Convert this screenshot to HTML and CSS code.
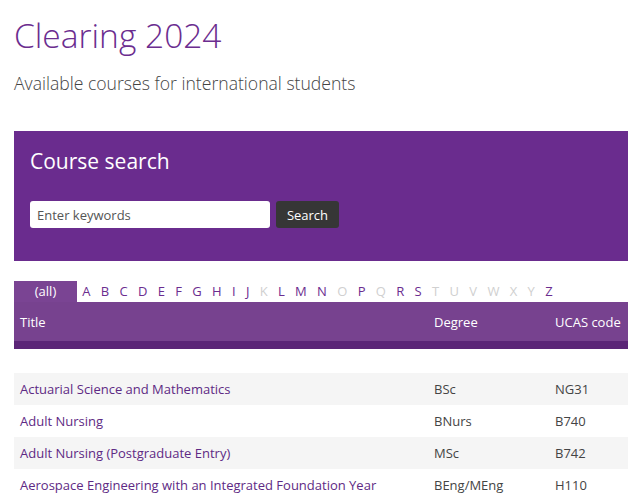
FILE: index.html
```html
<!DOCTYPE html>
<html lang="en">
<head>
<meta charset="utf-8">
<title>Clearing 2024</title>
<link rel="stylesheet" href="styles.css">
</head>
<body>
<main class="page">
  <h1 class="title">Clearing 2024</h1>
  <p class="subtitle">Available courses for international students</p>

  <section class="search">
    <h2 class="search-title">Course search</h2>
    <form class="search-form">
      <input class="search-input" type="text" placeholder="Enter keywords">
      <button class="search-btn" type="button">Search</button>
    </form>
  </section>

  <nav class="letters">
    <span class="tab-all">(all)</span>
    <a class="letter">A</a><a class="letter">B</a><a class="letter">C</a><a class="letter">D</a><a class="letter">E</a><a class="letter">F</a><a class="letter">G</a><a class="letter">H</a><a class="letter">I</a><a class="letter">J</a><span class="letter off">K</span><a class="letter">L</a><a class="letter">M</a><a class="letter">N</a><span class="letter off">O</span><a class="letter">P</a><span class="letter off">Q</span><a class="letter">R</a><a class="letter">S</a><span class="letter off">T</span><span class="letter off">U</span><span class="letter off">V</span><span class="letter off">W</span><span class="letter off">X</span><span class="letter off">Y</span><a class="letter">Z</a>
  </nav>

  <div class="thead">
    <div class="hrow">
      <span class="c-title">Title</span>
      <span class="c-degree">Degree</span>
      <span class="c-code">UCAS code</span>
    </div>
    <div class="strip"></div>
  </div>

  <div class="tbody">
    <div class="row odd"><a class="c-title link">Actuarial Science and Mathematics</a><span class="c-degree">BSc</span><span class="c-code">NG31</span></div>
    <div class="row"><a class="c-title link">Adult Nursing</a><span class="c-degree">BNurs</span><span class="c-code">B740</span></div>
    <div class="row odd"><a class="c-title link">Adult Nursing (Postgraduate Entry)</a><span class="c-degree">MSc</span><span class="c-code">B742</span></div>
    <div class="row"><a class="c-title link">Aerospace Engineering with an Integrated Foundation Year</a><span class="c-degree">BEng/MEng</span><span class="c-code">H110</span></div>
  </div>
</main>
</body>
</html>
```
FILE: styles.css
```css
html, body {
  margin: 0;
  padding: 0;
  background: #fff;
}
body {
  font-family: "Open Sans", "DejaVu Sans", sans-serif;
  color: #444;
}
.page {
  width: 614px;
  padding: 0 12px 0 14px;
}
.title {
  margin: 0;
  padding-top: 13px;
  font-size: 33.5px;
  font-weight: 300;
  line-height: 44px;
  color: #6b2d8f;
}
.subtitle {
  margin: 14px 0 0;
  font-size: 17.6px;
  font-weight: 300;
  line-height: 24px;
  color: #444;
}
.search {
  margin-top: 36px;
  background: #6a2c8e;
  height: 130px;
  box-sizing: border-box;
  padding: 16px 16px 0;
}
.search-title {
  margin: 0;
  font-size: 21px;
  font-weight: 400;
  line-height: 28px;
  color: #fff;
}
.search-form {
  display: flex;
  gap: 6px;
  margin-top: 26px;
}
.search-input {
  width: 240px;
  height: 27px;
  box-sizing: border-box;
  border: 0;
  border-radius: 3px;
  padding: 0 7px;
  font-family: inherit;
  font-size: 13px;
  background: #fff;
}
.search-input::placeholder {
  color: #555;
}
.search-btn {
  width: 63px;
  height: 27px;
  border: 0;
  border-radius: 3px;
  background: #363636;
  color: #fff;
  font-family: inherit;
  font-size: 13px;
  padding: 0;
}
.letters {
  margin-top: 20px;
  display: flex;
  align-items: stretch;
  height: 21px;
  font-size: 13px;
  font-weight: 500;
  line-height: 21px;
}
.tab-all {
  width: 63px;
  background: #7a4493;
  color: #fff;
  text-align: center;
}
.letter {
  padding: 0 5.17px;
  color: #6b2d8f;
}
.letter.off {
  color: #d0d0d0;
  font-weight: 400;
}
.thead {
  background: #77428f;
  color: #fff;
  font-size: 13px;
  font-weight: 400;
}
.hrow {
  display: flex;
  height: 39px;
  align-items: center;
}
.strip {
  height: 8px;
  background: #5b2577;
}
.c-title {
  flex: 0 0 414px;
  box-sizing: border-box;
  padding-left: 6px;
}
.c-degree {
  flex: 0 0 121px;
  box-sizing: border-box;
  padding-left: 6px;
}
.c-code {
  flex: 1;
  box-sizing: border-box;
  padding-left: 6px;
}
.tbody {
  margin-top: 24px;
  font-size: 13px;
}
.row {
  display: flex;
  align-items: center;
  height: 32px;
  color: #444;
}
.row.odd {
  background: #f5f5f5;
}
.link {
  color: #5e2a84;
}
```
